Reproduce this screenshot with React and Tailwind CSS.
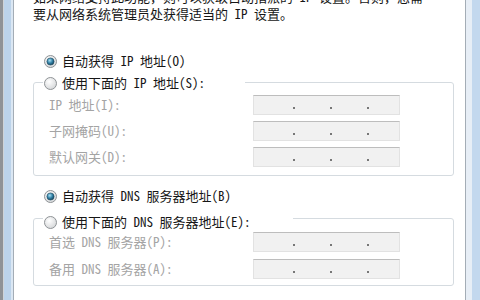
import React from 'react'

const FONT = "font-['Noto_Sans_Mono_CJK_SC','Noto_Sans_CJK_SC',sans-serif]"

function Radio({ checked }) {
  return (
    <svg width="13" height="13" viewBox="0 0 13 13" className="shrink-0">
      <defs>
        <radialGradient id="rb-off" cx="40%" cy="35%" r="70%">
          <stop offset="0%" stopColor="#ffffff" />
          <stop offset="100%" stopColor="#d4d6d8" />
        </radialGradient>
        <radialGradient id="rb-dot" cx="40%" cy="35%" r="70%">
          <stop offset="0%" stopColor="#a8e0f4" />
          <stop offset="55%" stopColor="#2f7ea3" />
          <stop offset="100%" stopColor="#163f55" />
        </radialGradient>
      </defs>
      <circle cx="6.5" cy="6.5" r="6" fill="url(#rb-off)" stroke="#8f9396" strokeWidth="1" />
      {checked && <circle cx="6.5" cy="6.5" r="3.6" fill="url(#rb-dot)" stroke="#1d4a60" strokeWidth="0.6" />}
    </svg>
  )
}

function IpBox() {
  return (
    <div className="h-[20px] w-[147px] bg-[#f1f1f1] border border-[#e2e2e2] border-t-[#bdbdbd] flex items-start pt-[11px] pl-[39px] gap-[35px]">
      <span className="block w-[2px] h-[2px] bg-[#777]" />
      <span className="block w-[2px] h-[2px] bg-[#777]" />
      <span className="block w-[2px] h-[2px] bg-[#777]" />
    </div>
  )
}

function Row({ label }) {
  return (
    <div className="grid grid-cols-[204px_147px] items-start">
      <span className="pt-[2px] leading-[16px] text-[#a4a4a4]">{label}</span>
      <IpBox />
    </div>
  )
}

export default function App() {
  return (
    <div className={`h-[300px] w-[480px] flex overflow-hidden bg-white text-[13px] ${FONT}`}>
      {/* left window frame */}
      <div className="flex shrink-0">
        <div className="w-[3px] bg-[#8f9296]" />
        <div className="w-[1px] bg-[#cfd3d6]" />
        <div className="w-[7px] bg-[#bcd3ea]" />
        <div className="w-[2px] bg-[#dbe7f3]" />
        <div className="w-[1px] bg-[#a4adb6]" />
      </div>

      <div className="flex-1 flex flex-col pl-[19px] pr-[11px] text-[#161616]">
        <p className="-mt-[12px] leading-[17px] whitespace-nowrap">
          如果网络支持此功能，则可以获取自动指派的 IP 设置。否则，您需<br />
          要从网络系统管理员处获得适当的 IP 设置。
        </p>

        <div className="mt-[31px] h-[16px] pl-[11px] flex items-center gap-[5px]">
          <Radio checked />
          <span className="leading-[16px]">自动获得 IP 地址(O)</span>
        </div>

        <div className="mt-[13px] border border-[#d5dbe0] rounded-[3px] pl-[15px] pb-[8px]">
          <div className="-mt-[8px] -ml-[6px] w-[202px] h-[16px] bg-white pl-[1px] flex items-center gap-[5px]">
            <Radio />
            <span className="leading-[16px]">使用下面的 IP 地址(S):</span>
          </div>
          <div className="mt-[4px] flex flex-col gap-[6px]">
            <Row label="IP 地址(I):" />
            <Row label="子网掩码(U):" />
            <Row label="默认网关(D):" />
          </div>
        </div>

        <div className="mt-[12px] h-[16px] pl-[11px] flex items-center gap-[5px]">
          <Radio checked />
          <span className="leading-[16px]">自动获得 DNS 服务器地址(B)</span>
        </div>

        <div className="mt-[14px] border border-[#d5dbe0] rounded-[3px] pl-[15px] pb-[6px]">
          <div className="-mt-[5px] -ml-[6px] w-[250px] h-[16px] bg-white pl-[1px] flex items-center gap-[5px]">
            <Radio />
            <span className="leading-[16px]">使用下面的 DNS 服务器地址(E):</span>
          </div>
          <div className="mt-[2px] flex flex-col gap-[7px]">
            <Row label="首选 DNS 服务器(P):" />
            <Row label="备用 DNS 服务器(A):" />
          </div>
        </div>
      </div>

      {/* right window frame */}
      <div className="flex shrink-0">
        <div className="w-[1px] bg-[#a4adb6]" />
        <div className="w-[6px] bg-[#e7eef6]" />
        <div className="w-[8px] bg-[#c3d8ee]" />
      </div>
    </div>
  )
}
